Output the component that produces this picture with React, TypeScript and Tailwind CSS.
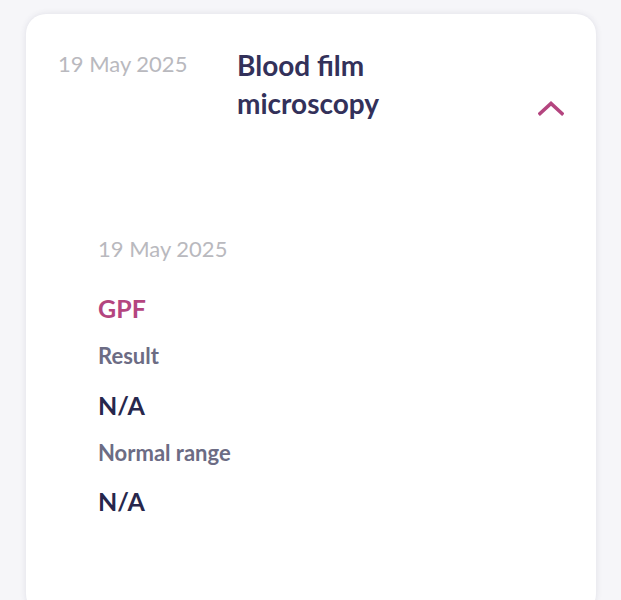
import React from "react";

export default function App() {
  return (
    <div className="min-h-[600px] w-full bg-[#f6f6f9] pt-[14px] px-[26px] overflow-hidden" style={{ fontFamily: "Lato, 'Noto Sans', sans-serif" }}>
      <div className="h-[600px] w-[570px] rounded-[20px] bg-white shadow-[0_0_6px_rgba(60,60,100,0.12)]">
        <div className="flex pl-[32px] pr-[32px] pt-[35px]">
          <div className="w-[179px] text-[22px] leading-[30px] text-[#b9b9be]">19 May 2025</div>
          <div className="flex-1 -mt-[3px] text-[28px] leading-[38px] font-bold text-[#33315a]">
            Blood film
            <br />
            microscopy
          </div>
          <div className="flex items-end pb-[6px]">
            <svg width="26" height="16" viewBox="0 0 26 16">
              <path d="M2 13.5 L13 3.5 L24 13.5" fill="none" stroke="#b4457f" strokeWidth="3.6" strokeLinecap="square" />
            </svg>
          </div>
        </div>
        <div className="pl-[72px] pt-[112px]">
          <div className="text-[22px] leading-[30px] text-[#b9b9be]">19 May 2025</div>
          <div className="mt-[28px] text-[25px] leading-[32px] font-bold text-[#b4457f]">GPF</div>
          <div className="mt-[16px] text-[22px] leading-[32px] font-bold text-[#6c6c84]">Result</div>
          <div className="mt-[17px] text-[25px] leading-[32px] font-bold text-[#27274c]">N/A</div>
          <div className="mt-[16px] text-[22px] leading-[32px] font-bold text-[#6c6c84]">Normal range</div>
          <div className="mt-[16px] text-[25px] leading-[32px] font-bold text-[#27274c]">N/A</div>
        </div>
      </div>
    </div>
  );
}
